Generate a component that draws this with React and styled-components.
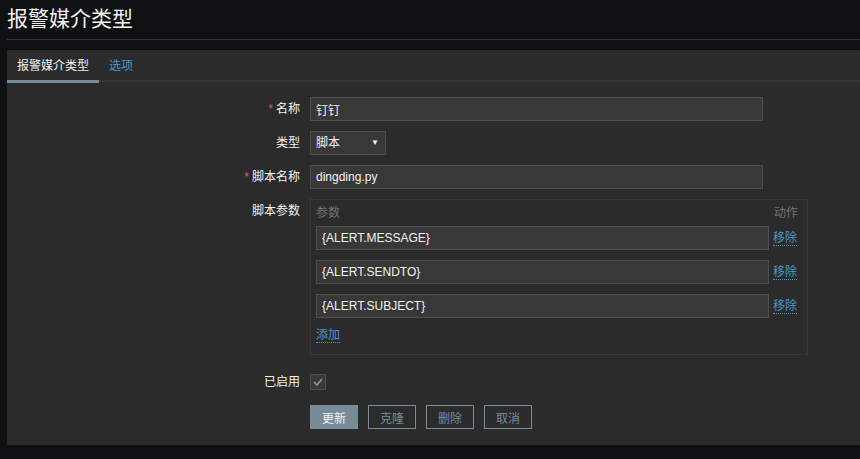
import React, { useState } from "react";
import styled, { createGlobalStyle } from "styled-components";

const GlobalStyle = createGlobalStyle`
  html, body {
    margin: 0;
    padding: 0;
    background: #0e1012;
    overflow: hidden;
  }
  body {
    font-family: "Liberation Sans", Arial, "Noto Sans CJK SC", sans-serif;
    font-size: 12px;
    color: #f2f2f2;
  }
`;

const Page = styled.div`
  padding-left: 7px;
  height: 459px;
`;

const Header = styled.div`
  height: 39px;
  border-bottom: 1px solid #383838;
  margin-bottom: 10px;
`;

const Title = styled.h1`
  margin: 0;
  font-size: 21px;
  font-weight: normal;
  line-height: 38px;
`;

const Panel = styled.div`
  background: #2b2b2b;
  padding-bottom: 16px;
`;

const TabBar = styled.div`
  display: flex;
  height: 30px;
  border-bottom: 2px solid #383838;
`;

const Tab = styled.a`
  display: block;
  padding: 2px 10px 0;
  line-height: 28px;
  height: 28px;
  margin-bottom: -2px;
  color: ${p => (p.$active ? "#f2f2f2" : "#4796c4")};
  border-bottom: 3px solid ${p => (p.$active ? "#768d99" : "transparent")};
  cursor: pointer;
`;

const Form = styled.div`
  display: flex;
  flex-direction: column;
  gap: 10px;
  padding-top: 15px;
`;

const Row = styled.div`
  display: grid;
  grid-template-columns: 293px auto;
  column-gap: 10px;
  align-items: ${p => (p.$center ? "center" : "start")};
  margin-top: ${p => p.$top || 0}px;
`;

const Label = styled.label`
  text-align: right;
  line-height: 24px;
  white-space: nowrap;
`;

const Asterisk = styled.span`
  color: #e45959;
  margin-right: 3px;
`;

const TextInput = styled.input`
  box-sizing: border-box;
  width: 453px;
  height: 24px;
  padding: 0 5px;
  background: #383838;
  border: 1px solid #4f4f4f;
  color: #f2f2f2;
  font: inherit;
  outline: none;
`;

const Select = styled.div`
  box-sizing: border-box;
  width: 76px;
  height: 24px;
  padding: 0 5px;
  background: #383838;
  border: 1px solid #4f4f4f;
  display: flex;
  align-items: center;
  justify-content: space-between;
  line-height: 22px;
`;

const Arrow = styled.span`
  font-size: 8px;
  color: #f2f2f2;
  margin-right: 1px;
`;

const ParamBox = styled.div`
  box-sizing: border-box;
  width: 498px;
  border: 1px solid #383838;
  padding: 5px 9px 11px 5px;
  display: grid;
  grid-template-columns: 453px auto;
  column-gap: 4px;
  row-gap: 10px;
  align-items: center;
`;

const HeadCell = styled.div`
  color: #737373;
  line-height: 16px;
  margin-bottom: -5px;
  text-align: ${p => (p.$right ? "right" : "left")};
`;

const LinkText = styled.a`
  color: #4796c4;
  border-bottom: 1px dotted #4796c4;
  line-height: 14px;
  justify-self: start;
  cursor: pointer;
`;

const Checkbox = styled.span`
  box-sizing: border-box;
  width: 16px;
  height: 16px;
  background: #383838;
  border: 1px solid #4f4f4f;
  display: flex;
  align-items: center;
  justify-content: center;
`;

const Buttons = styled.div`
  display: flex;
  gap: 10px;
`;

const Button = styled.button`
  box-sizing: border-box;
  height: 24px;
  width: 48px;
  padding: 0;
  font: inherit;
  cursor: pointer;
  border: 1px solid #768d99;
  background: ${p => (p.$primary ? "#768d99" : "transparent")};
  color: ${p => (p.$primary ? "#f2f2f2" : "#768d99")};
`;

const params = ["{ALERT.MESSAGE}", "{ALERT.SENDTO}", "{ALERT.SUBJECT}"];

export default function App() {
  const [name, setName] = useState("钉钉");
  const [script, setScript] = useState("dingding.py");

  return (
    <>
      <GlobalStyle />
      <Page>
        <Header>
          <Title>报警媒介类型</Title>
        </Header>
        <Panel>
          <TabBar>
            <Tab $active>报警媒介类型</Tab>
            <Tab>选项</Tab>
          </TabBar>
          <Form>
            <Row>
              <Label><Asterisk>*</Asterisk>名称</Label>
              <TextInput value={name} onChange={e => setName(e.target.value)} />
            </Row>
            <Row>
              <Label>类型</Label>
              <Select>
                <span>脚本</span>
                <Arrow>▼</Arrow>
              </Select>
            </Row>
            <Row>
              <Label><Asterisk>*</Asterisk>脚本名称</Label>
              <TextInput value={script} onChange={e => setScript(e.target.value)} />
            </Row>
            <Row>
              <Label>脚本参数</Label>
              <ParamBox>
                <HeadCell>参数</HeadCell>
                <HeadCell $right>动作</HeadCell>
                {params.map(p => (
                  <React.Fragment key={p}>
                    <TextInput defaultValue={p} />
                    <LinkText>移除</LinkText>
                  </React.Fragment>
                ))}
                <LinkText>添加</LinkText>
              </ParamBox>
            </Row>
            <Row $center $top={5}>
              <Label>已启用</Label>
              <Checkbox>
                <svg width="10" height="8" viewBox="0 0 10 8">
                  <path d="M1 4 L4 7 L9 1" fill="none" stroke="#8a9aa3" strokeWidth="1.6" />
                </svg>
              </Checkbox>
            </Row>
            <Row $top={1}>
              <span />
              <Buttons>
                <Button $primary>更新</Button>
                <Button>克隆</Button>
                <Button>删除</Button>
                <Button>取消</Button>
              </Buttons>
            </Row>
          </Form>
        </Panel>
      </Page>
    </>
  );
}
